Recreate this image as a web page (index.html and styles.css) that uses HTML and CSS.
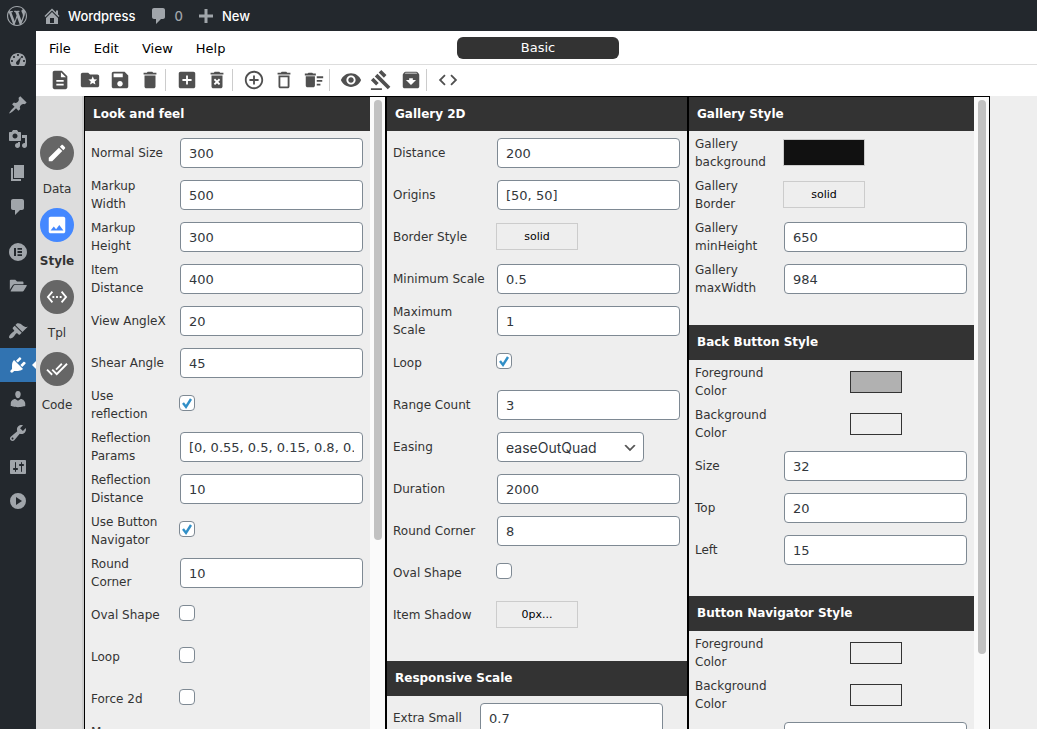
FILE: index.html
```html
<!DOCTYPE html>
<html lang="en">
<head>
    <meta charset="UTF-8">
    <meta name="viewport" content="width=device-width, initial-scale=1.0">
    <title>Wordpress - Gallery Builder</title>
    <link rel="stylesheet" href="styles.css">
</head>
<body>
    <!-- Admin bar -->
    <header class="adminbar">
        <a href="#" class="wp-logo" aria-label="About WordPress"><svg viewBox="0 0 20 20"><path d="M20 10c0-5.51-4.49-10-10-10C4.48 0 0 4.49 0 10c0 5.52 4.48 10 10 10 5.51 0 10-4.48 10-10zM7.78 15.37L4.37 6.22c.55-.02 1.17-.08 1.17-.08.5-.06.44-1.13-.06-1.11 0 0-1.45.11-2.37.11-.18 0-.37 0-.58-.01C4.12 2.69 6.87 1.11 10 1.11c2.33 0 4.45.87 6.05 2.34-.68-.11-1.65.39-1.65 1.58 0 .74.45 1.36.9 2.1.35.61.55 1.36.55 2.46 0 1.49-1.4 5-1.4 5l-3.03-8.37c.54-.02.82-.17.82-.17.5-.05.44-1.25-.06-1.22 0 0-1.44.12-2.38.12-.87 0-2.33-.12-2.33-.12-.5-.03-.56 1.2-.06 1.22l.92.08 1.26 3.41zM17.41 10c.24-.64.74-1.87.43-4.25.7 1.29 1.05 2.71 1.05 4.25 0 3.29-1.73 6.24-4.4 7.78.97-2.59 1.94-5.2 2.92-7.78zM6.1 18.09C3.12 16.65 1.11 13.53 1.11 10c0-1.3.23-2.48.72-3.59C3.25 10.3 4.67 14.2 6.1 18.09zm4.03-6.63l2.58 6.98c-.86.29-1.76.45-2.71.45-.79 0-1.57-.11-2.29-.33.81-2.38 1.62-4.74 2.42-7.1z"/></svg></a>
        <a href="#" class="site-name"><svg viewBox="0 0 20 20"><path d="M16 8.5l1.53 1.53-1.06 1.06L10 4.6l-6.47 6.49-1.06-1.06L10 2.5l4 4v-2h2v4zm-6-2.46l6 5.99V18H4v-5.97zM12 17v-5H8v5h4z"/></svg>Wordpress</a>
        <a href="#" class="comments"><svg viewBox="0 0 20 20"><path d="M5 2h9c1.1 0 2 .9 2 2v7c0 1.1-.9 2-2 2h-2l-5 5v-5H5c-1.1 0-2-.9-2-2V4c0-1.1.9-2 2-2z"/></svg>0</a>
        <a href="#" class="new-content"><svg viewBox="0 0 20 20"><path d="M17 8.500v3h-5.500V17h-3v-5.500H3v-3h5.500V3h3v5.500z"/></svg>New</a>
    </header>

    <div class="wrapper">
        <!-- Admin menu -->
        <nav class="adminmenu">
            <a href="#" aria-label="Dashboard"><svg viewBox="0 0 20 20"><path d="M3.76 16h12.48c1.1-1.37 1.76-3.11 1.76-5 0-4.42-3.58-8-8-8s-8 3.58-8 8c0 1.89.66 3.63 1.76 5zM10 4c.55 0 1 .45 1 1s-.45 1-1 1-1-.45-1-1 .45-1 1-1zM6 6c.55 0 1 .45 1 1s-.45 1-1 1-1-.45-1-1 .45-1 1-1zm8 0c.55 0 1 .45 1 1s-.45 1-1 1-1-.45-1-1 .45-1 1-1zm-5.370 5.550L13 7l-1.500 6c0 1.100-.9 2-1.500 2-1.100 0-2-.9-2-2 0-.57.24-1.080.63-1.450zM4 10c.55 0 1 .45 1 1s-.45 1-1 1-1-.45-1-1 .45-1 1-1zm12 0c.55 0 1 .45 1 1s-.45 1-1 1-1-.45-1-1 .45-1 1-1z"/></svg></a>
            <a href="#" class="group" aria-label="Posts"><svg viewBox="0 0 20 20"><path d="M10.44 3.02l1.82-1.82 6.36 6.35-1.83 1.82c-1.05-.68-2.48-.57-3.41.36l-.75.75c-.92.93-1.04 2.35-.35 3.41l-1.83 1.82-2.41-2.41-2.8 2.79c-.42.42-3.38 2.71-3.8 2.29s1.86-3.39 2.28-3.81l2.79-2.79L4.1 9.36l1.83-1.82c1.05.69 2.48.57 3.4-.36l.75-.75c.93-.92 1.05-2.35.36-3.41z"/></svg></a>
            <a href="#" aria-label="Media"><svg viewBox="0 0 20 20"><path d="M13 11V4c0-.55-.45-1-1-1h-1.67L9 1H5L3.67 3H2c-.55 0-1 .45-1 1v7c0 .55.45 1 1 1h10c.55 0 1-.45 1-1zM7 4.5c1.38 0 2.5 1.12 2.5 2.5S8.38 9.5 7 9.5 4.5 8.38 4.5 7 5.62 4.5 7 4.5zM14 6h5v10.5c0 1.38-1.12 2.5-2.5 2.5S14 17.88 14 16.5s1.12-2.5 2.5-2.5c.17 0 .34.02.5.05V9h-3V6zm-4 8.05V13h2v3.5c0 1.38-1.12 2.5-2.5 2.5S7 17.88 7 16.5 8.12 14 9.5 14c.17 0 .34.02.5.05z"/></svg></a>
            <a href="#" aria-label="Pages"><svg viewBox="0 0 20 20"><path d="M6 15V2h10v13H6zm-1 1h8v2H3V5h2v11z"/></svg></a>
            <a href="#" aria-label="Comments"><svg viewBox="0 0 20 20"><path d="M5 2h9c1.1 0 2 .9 2 2v7c0 1.1-.9 2-2 2h-2l-5 5v-5H5c-1.1 0-2-.9-2-2V4c0-1.1.9-2 2-2z"/></svg></a>
            <a href="#" class="group" aria-label="Elementor"><svg viewBox="0 0 20 20"><path fill-rule="evenodd" d="M10 1a9 9 0 1 0 0 18a9 9 0 1 0 0-18zM6 6h2v8H6zM9.500 6H14v1.800H9.500zM9.500 9.100H14v1.800H9.500zM9.500 12.200H14V14H9.500z"/></svg></a>
            <a href="#" aria-label="Templates"><svg viewBox="-1 -1 22 22"><path d="M1 4c0-.6.4-1 1-1h5l2 2h6c.6 0 1 .4 1 1v2H6.500c-1 0-1.800.5-2.300 1.300L1 14zM6.500 9H19c.6 0 .8.4.5 1l-3.200 5.300c-.3.500-.8.700-1.300.700H2.500c-.6 0-.8-.4-.5-.9L5.200 9.700c.3-.5.800-.7 1.300-.7z"/></svg></a>
            <a href="#" class="group" aria-label="Appearance"><svg viewBox="0 0 20 20"><path d="M14.48 11.06L7.41 3.99l1.5-1.5c.5-.56 2.3-.47 3.51.32 1.21.8 1.43 1.28 2.91 2.1 1.18.64 2.45 1.26 4.45.85zm-.71.71L6.7 4.7 4.93 6.47c-.39.39-.39 1.02 0 1.41l1.06 1.06c.39.39.39 1.03 0 1.42-.6.6-1.43 1.11-2.21 1.69-.35.26-.7.53-1.01.84C1.43 14.23.4 16.08 1.4 17.07c.99 1 2.84-.03 4.18-1.36.31-.31.58-.66.85-1.02.57-.78 1.08-1.61 1.69-2.21.39-.39 1.02-.39 1.41 0l1.06 1.06c.39.39 1.02.39 1.41 0z"/></svg></a>
            <a href="#" class="current" aria-label="Plugins"><svg viewBox="0 0 20 20"><path d="M13.11 4.36L9.87 7.6 8 5.73l3.24-3.24c.35-.34 1.05-.2 1.56.32.52.51.66 1.21.31 1.55zm-8 1.77l.91-1.12 9.01 9.01-1.19.84c-.71.71-2.63 1.16-3.82 1.16H6.14L4.9 17.26c-.59.59-1.54.59-2.12 0-.59-.58-.59-1.53 0-2.12l1.24-1.24v-3.88c0-1.13.4-3.19 1.09-3.89zm7.26 3.97l3.24-3.24c.34-.35 1.04-.21 1.55.31.52.51.66 1.21.31 1.55l-3.24 3.25z"/></svg></a>
            <a href="#" aria-label="Users"><svg viewBox="0 0 20 20"><path d="M10 9.250c-2.270 0-2.730-3.440-2.730-3.440C7 4.020 7.820 2 9.970 2c2.160 0 2.980 2.020 2.710 3.810 0 0-.41 3.440-2.680 3.440zm0 2.570L12.720 10c2.390 0 4.520 2.330 4.520 4.530v2.490s-3.650 1.130-7.240 1.130c-3.650 0-7.240-1.130-7.240-1.130v-2.490c0-2.250 1.940-4.480 4.470-4.480z"/></svg></a>
            <a href="#" aria-label="Tools"><svg viewBox="0 0 20 20"><path d="M16.68 9.77c-1.34 1.34-3.3 1.67-4.95.99l-5.41 6.52c-.99.99-2.59.99-3.58 0s-.99-2.59 0-3.57l6.52-5.42c-.68-1.65-.35-3.61.99-4.95 1.28-1.28 3.12-1.62 4.72-1.06l-2.89 2.89 2.82 2.82 2.86-2.87c.53 1.58.18 3.39-1.08 4.65zM3.81 16.21c.4.39 1.04.39 1.43 0 .4-.4.4-1.04 0-1.43-.39-.4-1.03-.4-1.43 0-.39.39-.39 1.03 0 1.43z"/></svg></a>
            <a href="#" aria-label="Settings"><svg viewBox="0 0 20 20"><path d="M18 16V4c0-.55-.45-1-1-1H3c-.55 0-1 .45-1 1v12c0 .55.45 1 1 1h14c.55 0 1-.45 1-1zM8 11h1c.55 0 1 .45 1 1s-.45 1-1 1H8v1.5c0 .28-.22.5-.5.5s-.5-.22-.5-.5V13H6c-.55 0-1-.45-1-1s.45-1 1-1h1V5.5c0-.28.22-.5.5-.5s.5.22.5.5V11zm5-2h-1c-.55 0-1-.45-1-1s.45-1 1-1h1V5.5c0-.28.22-.5.5-.5s.5.22.5.5V7h1c.55 0 1 .45 1 1s-.45 1-1 1h-1v5.5c0 .28-.22.5-.5.5s-.5-.22-.5-.5V9z"/></svg></a>
            <a href="#" aria-label="Collapse menu"><svg viewBox="0 0 20 20"><path fill-rule="evenodd" d="M10 2a8 8 0 1 0 0 16a8 8 0 1 0 0-16zM8 6l6 4-6 4z"/></svg></a>
        </nav>

        <main class="editor">
            <div class="menubar">
                <nav class="menu">
                    <a href="#">File</a>
                    <a href="#">Edit</a>
                    <a href="#">View</a>
                    <a href="#">Help</a>
                </nav>
                <button type="button" class="mode">Basic</button>
            </div>

            <div class="toolbar">
                <button type="button" aria-label="New"><svg viewBox="0 0 24 24"><path d="M14 2H6c-1.1 0-1.99.9-1.99 2L4 20c0 1.1.89 2 1.99 2H18c1.1 0 2-.9 2-2V8l-6-6zm2 16H8v-2h8v2zm0-4H8v-2h8v2zm-3-5V3.5L18.5 9H13z"/></svg></button>
                <button type="button" aria-label="Open"><svg viewBox="0 0 24 24"><path d="M20 6h-8l-2-2H4c-1.1 0-1.99.9-1.99 2L2 18c0 1.1.9 2 2 2h16c1.1 0 2-.9 2-2V8c0-1.1-.9-2-2-2zm-2.06 11L15 15.28 12.06 17l.78-3.33-2.59-2.24 3.41-.29L15 8l1.34 3.14 3.41.29-2.59 2.24.78 3.33z"/></svg></button>
                <button type="button" aria-label="Save"><svg viewBox="0 0 24 24"><path d="M17 3H5c-1.11 0-2 .9-2 2v14c0 1.1.89 2 2 2h14c1.1 0 2-.9 2-2V7l-4-4zm-5 16c-1.66 0-3-1.34-3-3s1.34-3 3-3 3 1.34 3 3-1.34 3-3 3zm3-10H5V5h10v4z"/></svg></button>
                <button type="button" aria-label="Delete"><svg viewBox="0 0 24 24"><path d="M6 19c0 1.1.9 2 2 2h8c1.1 0 2-.9 2-2V7H6v12zM19 4h-3.5l-1-1h-5l-1 1H5v2h14V4z"/></svg></button>
                <span class="sep"></span>
                <button type="button" aria-label="Add page"><svg viewBox="0 0 24 24"><path d="M19 3H5c-1.11 0-2 .9-2 2v14c0 1.1.89 2 2 2h14c1.1 0 2-.9 2-2V5c0-1.1-.9-2-2-2zm-2 10h-4v4h-2v-4H7v-2h4V7h2v4h4v2z"/></svg></button>
                <button type="button" aria-label="Remove page"><svg viewBox="0 0 24 24"><path d="M6 19c0 1.1.9 2 2 2h8c1.1 0 2-.9 2-2V7H6v12zm2.46-7.12l1.41-1.41L12 12.59l2.12-2.12 1.41 1.41L13.41 14l2.12 2.12-1.41 1.41L12 15.41l-2.12 2.12-1.41-1.41L10.59 14l-2.13-2.12zM15.5 4l-1-1h-5l-1 1H5v2h14V4z"/></svg></button>
                <span class="sep"></span>
                <button type="button" aria-label="Add item"><svg viewBox="0 0 24 24"><path d="M13 7h-2v4H7v2h4v4h2v-4h4v-2h-4V7zm-1-5C6.48 2 2 6.48 2 12s4.48 10 10 10 10-4.48 10-10S17.52 2 12 2zm0 18c-4.41 0-8-3.59-8-8s3.59-8 8-8 8 3.59 8 8-3.59 8-8 8z"/></svg></button>
                <button type="button" aria-label="Remove item"><svg viewBox="0 0 24 24"><path d="M6 19c0 1.1.9 2 2 2h8c1.1 0 2-.9 2-2V7H6v12zM8 9h8v10H8V9zm7.5-5l-1-1h-5l-1 1H5v2h14V4h-3.5z"/></svg></button>
                <button type="button" aria-label="Remove all items"><svg viewBox="0 0 24 24"><path d="M15 16h4v2h-4zm0-8h7v2h-7zm0 4h6v2h-6zM3 18c0 1.1.9 2 2 2h6c1.1 0 2-.9 2-2V8H3v10zM14 5h-3l-1-1H6L5 5H2v2h12z"/></svg></button>
                <span class="sep"></span>
                <button type="button" aria-label="Preview"><svg viewBox="0 0 24 24"><path d="M12 4.5C7 4.5 2.73 7.61 1 12c1.73 4.39 6 7.5 11 7.5s9.27-3.11 11-7.5c-1.73-4.39-6-7.5-11-7.5zM12 17c-2.76 0-5-2.24-5-5s2.24-5 5-5 5 2.24 5 5-2.24 5-5 5zm0-8c-1.66 0-3 1.34-3 3s1.34 3 3 3 3-1.34 3-3-1.34-3-3-3z"/></svg></button>
                <button type="button" aria-label="Build"><svg viewBox="0 0 24 24"><path d="M1 21h12v2H1zM5.245 8.07l2.83-2.827 14.14 14.142-2.828 2.828zM12.317 1l5.657 5.656-2.83 2.83-5.654-5.66zM3.825 9.485l5.657 5.657-2.828 2.828-5.657-5.657z"/></svg></button>
                <button type="button" aria-label="Archive"><svg viewBox="0 0 24 24"><path d="M20.54 5.23l-1.39-1.68C18.88 3.21 18.47 3 18 3H6c-.47 0-.88.21-1.16.55L3.46 5.23C3.17 5.57 3 6.02 3 6.5V19c0 1.1.9 2 2 2h14c1.1 0 2-.9 2-2V6.5c0-.48-.17-.93-.46-1.27zM12 17.5L6.5 12H10v-2h4v2h3.5L12 17.5zM5.12 5l.81-1h12l.94 1H5.12z"/></svg></button>
                <span class="sep"></span>
                <button type="button" aria-label="Source"><svg viewBox="0 0 24 24"><path d="M9.4 16.6L4.8 12l4.6-4.6L8 6l-6 6 6 6 1.4-1.4zm5.2 0l4.6-4.6-4.6-4.6L16 6l6 6-6 6-1.4-1.4z"/></svg></button>
            </div>

            <div class="workspace">
                <nav class="tabs">
                    <button type="button"><span class="circle"><svg viewBox="0 0 24 24"><path d="M3 17.250V21h3.750L17.810 9.940l-3.750-3.750L3 17.250zM20.710 7.040c.39-.39.39-1.020 0-1.410l-2.340-2.340c-.39-.39-1.020-.39-1.410 0l-1.830 1.830 3.750 3.750 1.830-1.830z"/></svg></span>Data</button>
                    <button type="button" class="active"><span class="circle"><svg viewBox="0 0 24 24"><path d="M21 19V5c0-1.1-.9-2-2-2H5c-1.1 0-2 .9-2 2v14c0 1.1.9 2 2 2h14c1.1 0 2-.9 2-2zM8.500 13.500l2.500 3.010L14.500 12l4.500 6H5l3.500-4.500z"/></svg></span>Style</button>
                    <button type="button"><span class="circle"><svg viewBox="0 0 24 24"><path d="M7.77 6.76L6.23 5.48.82 12l5.41 6.52 1.54-1.28L3.42 12l4.35-5.24zM7 13h2v-2H7v2zm10-2h-2v2h2v-2zm-6 2h2v-2h-2v2zm6.77-7.52l-1.54 1.28L20.58 12l-4.35 5.24 1.54 1.28L23.18 12l-5.41-6.52z"/></svg></span>Tpl</button>
                    <button type="button"><span class="circle"><svg viewBox="0 0 24 24"><path d="M18 7l-1.41-1.41-6.34 6.34 1.41 1.41L18 7zm4.24-1.41L11.66 16.17 7.48 12l-1.41 1.41L11.66 19l12-12-1.42-1.41zM.41 13.41L6 19l1.41-1.41L1.83 12 .41 13.41z"/></svg></span>Code</button>
                </nav>

                <!-- Column 1 -->
                <div class="panel">
                    <div class="panel-body">
                        <section>
                            <h2>Look and feel</h2>
                            <div class="row"><label for="normalSize">Normal Size</label><input type="text" id="normalSize" value="300"></div>
                            <div class="row"><label for="markupWidth">Markup Width</label><input type="text" id="markupWidth" value="500"></div>
                            <div class="row"><label for="markupHeight">Markup Height</label><input type="text" id="markupHeight" value="300"></div>
                            <div class="row"><label for="itemDistance">Item Distance</label><input type="text" id="itemDistance" value="400"></div>
                            <div class="row"><label for="viewAngleX">View AngleX</label><input type="text" id="viewAngleX" value="20"></div>
                            <div class="row"><label for="shearAngle">Shear Angle</label><input type="text" id="shearAngle" value="45"></div>
                            <div class="row"><label for="useReflection">Use reflection</label><input type="checkbox" id="useReflection" checked></div>
                            <div class="row"><label for="reflectionParams">Reflection Params</label><input type="text" id="reflectionParams" value="[0, 0.55, 0.5, 0.15, 0.8, 0.05]"></div>
                            <div class="row"><label for="reflectionDistance">Reflection Distance</label><input type="text" id="reflectionDistance" value="10"></div>
                            <div class="row"><label for="useButtonNav">Use Button Navigator</label><input type="checkbox" id="useButtonNav" checked></div>
                            <div class="row"><label for="roundCorner">Round Corner</label><input type="text" id="roundCorner" value="10"></div>
                            <div class="row"><label for="ovalShape">Oval Shape</label><input type="checkbox" id="ovalShape"></div>
                            <div class="row"><label for="loop">Loop</label><input type="checkbox" id="loop"></div>
                            <div class="row"><label for="force2d">Force 2d</label><input type="checkbox" id="force2d"></div>
                            <div class="row"><label for="mouseWheel">Mouse<br>Wheel</label><input type="checkbox" id="mouseWheel"></div>
                        </section>
                    </div>
                    <div class="scrollbar"><div class="thumb" style="height: 70%"></div></div>
                </div>

                <!-- Column 2 -->
                <div class="panel">
                    <div class="panel-body">
                        <section class="wide">
                            <h2>Gallery 2D</h2>
                            <div class="row"><label for="distance">Distance</label><input type="text" id="distance" value="200"></div>
                            <div class="row"><label for="origins">Origins</label><input type="text" id="origins" value="[50, 50]"></div>
                            <div class="row"><label for="borderStyle">Border Style</label><button type="button" class="value" id="borderStyle">solid</button></div>
                            <div class="row"><label for="minScale">Minimum Scale</label><input type="text" id="minScale" value="0.5"></div>
                            <div class="row"><label for="maxScale">Maximum<br>Scale</label><input type="text" id="maxScale" value="1"></div>
                            <div class="row"><label for="loop2d">Loop</label><input type="checkbox" id="loop2d" checked></div>
                            <div class="row"><label for="rangeCount">Range Count</label><input type="text" id="rangeCount" value="3"></div>
                            <div class="row"><label for="easing">Easing</label>
                                <select id="easing">
                                    <option>easeOutQuad</option>
                                    <option>easeInQuad</option>
                                    <option>linear</option>
                                </select>
                            </div>
                            <div class="row"><label for="duration">Duration</label><input type="text" id="duration" value="2000"></div>
                            <div class="row"><label for="roundCorner2d">Round Corner</label><input type="text" id="roundCorner2d" value="8"></div>
                            <div class="row"><label for="ovalShape2d">Oval Shape</label><input type="checkbox" id="ovalShape2d"></div>
                            <div class="row"><label for="itemShadow">Item Shadow</label><button type="button" class="value" id="itemShadow">0px...</button></div>
                        </section>
                        <section class="narrow">
                            <h2>Responsive Scale</h2>
                            <div class="row"><label for="extraSmall">Extra Small</label><input type="text" id="extraSmall" value="0.7"></div>
                        </section>
                    </div>
                </div>

                <!-- Column 3 -->
                <div class="panel">
                    <div class="panel-body">
                        <section>
                            <h2>Gallery Style</h2>
                            <div class="row"><label for="galleryBg">Gallery background</label><button type="button" class="value dark" id="galleryBg"></button></div>
                            <div class="row"><label for="galleryBorder">Gallery Border</label><button type="button" class="value" id="galleryBorder">solid</button></div>
                            <div class="row"><label for="minHeight">Gallery minHeight</label><input type="text" id="minHeight" value="650"></div>
                            <div class="row"><label for="maxWidth">Gallery maxWidth</label><input type="text" id="maxWidth" value="984"></div>
                        </section>
                        <section>
                            <h2>Back Button Style</h2>
                            <div class="row"><label for="backFg">Foreground Color</label><button type="button" class="swatch gray" id="backFg"></button></div>
                            <div class="row"><label for="backBg">Background Color</label><button type="button" class="swatch" id="backBg"></button></div>
                            <div class="row"><label for="backSize">Size</label><input type="text" id="backSize" value="32"></div>
                            <div class="row"><label for="backTop">Top</label><input type="text" id="backTop" value="20"></div>
                            <div class="row"><label for="backLeft">Left</label><input type="text" id="backLeft" value="15"></div>
                        </section>
                        <section>
                            <h2>Button Navigator Style</h2>
                            <div class="row"><label for="navFg">Foreground Color</label><button type="button" class="swatch" id="navFg"></button></div>
                            <div class="row"><label for="navBg">Background Color</label><button type="button" class="swatch" id="navBg"></button></div>
                            <div class="row"><span></span><input type="text" aria-label="Size"></div>
                        </section>
                    </div>
                    <div class="scrollbar"><div class="thumb" style="height: 88%"></div></div>
                </div>
            </div>
        </main>
    </div>
</body>
</html>
```
FILE: styles.css
```css
* {
    box-sizing: border-box;
}

body {
    font-family: Verdana, "DejaVu Sans", sans-serif;
    font-size: 12px;
    color: #333;
    background-color: #eee;
    margin: 0;
    height: 100vh;
    display: flex;
    flex-direction: column;
    overflow: hidden;
}

svg {
    display: block;
    fill: currentColor;
    flex: none;
}

a {
    text-decoration: none;
}

button {
    font-family: inherit;
    cursor: pointer;
}

/* Admin bar */
.adminbar {
    background-color: #23282d;
    height: 31px;
    flex: none;
    display: flex;
    align-items: center;
    gap: 13px;
    padding-left: 7px;
    font-family: Inter, sans-serif;
    font-size: 13px;
    font-weight: 500;
}

.adminbar a {
    display: flex;
    align-items: center;
    gap: 6px;
    color: #fff;
}

.adminbar svg {
    width: 20px;
    height: 20px;
    color: #a0a5aa;
}

.adminbar .site-name {
    margin-left: 2px;
}

.adminbar .comments {
    color: #a0a5aa;
}

.wrapper {
    display: flex;
    flex: 1;
    min-height: 0;
}

/* Admin menu */
.adminmenu {
    width: 36px;
    flex: none;
    background-color: #23282d;
    padding-top: 12px;
}

.adminmenu a {
    display: flex;
    align-items: center;
    justify-content: center;
    height: 34px;
    color: #a0a5aa;
}

.adminmenu svg {
    width: 20px;
    height: 20px;
}

.adminmenu .group {
    margin-top: 11px;
}

.adminmenu .current {
    background-color: #3173b1;
    color: #fff;
    position: relative;
}

.adminmenu .current::after {
    content: "";
    position: absolute;
    right: 0;
    top: 13px;
    border: 4px solid transparent;
    border-left: none;
    border-right-color: #fff;
}

/* Editor */
.editor {
    flex: 1;
    min-width: 0;
    display: flex;
    flex-direction: column;
}

.menubar {
    height: 34px;
    flex: none;
    display: grid;
    grid-template-columns: 1fr 162px 1fr;
    align-items: center;
    padding-left: 3px;
    background-color: #fff;
    border-bottom: 1px solid #ddd;
    font-size: 13px;
}

.menu {
    display: flex;
    gap: 23px;
    padding: 2px 0 0 10px;
}

.menu a {
    color: #000;
}

.mode {
    height: 22px;
    border: none;
    border-radius: 6px;
    background-color: #333;
    color: #fff;
    font-size: 13px;
    padding: 0;
}

.toolbar {
    height: 31px;
    flex: none;
    display: flex;
    align-items: center;
    padding: 0 9px 2px;
    background-color: #fff;
}

.toolbar button {
    width: 30px;
    padding: 0 4px;
    border: none;
    background: none;
    color: #505050;
}

.toolbar svg {
    width: 22px;
    height: 22px;
}

.sep {
    width: 1px;
    height: 22px;
    margin-right: 6px;
    background-color: #ccc;
}

.workspace {
    flex: 1;
    min-height: 0;
    display: flex;
}

/* Round tabs on the left */
.tabs {
    width: 48px;
    flex: none;
    background-color: #ddd;
    border-right: 2px solid #ccc;
    padding-top: 40px;
}

.tabs button {
    display: flex;
    flex-direction: column;
    align-items: center;
    gap: 12px;
    width: 42px;
    height: 72px;
    padding: 0;
    border: none;
    background: none;
    font-size: 12px;
    color: #333;
}

.circle {
    width: 34px;
    height: 34px;
    border-radius: 50%;
    background-color: #666;
    color: #fff;
    display: flex;
    align-items: center;
    justify-content: center;
}

.circle svg {
    width: 22px;
    height: 22px;
}

.tabs .active {
    font-weight: bold;
}

.active .circle {
    background-color: #4488ff;
}

/* Panels */
.panel {
    flex: 0 1 302px;
    display: flex;
    border: 1px solid #000;
    border-bottom: none;
    overflow: hidden;
}

.panel-body {
    flex: 1;
    min-width: 0;
}

.scrollbar {
    width: 15px;
    flex: none;
    background-color: #fafafa;
    padding: 3px 3px 0 4px;
}

.thumb {
    background-color: #c1c1c1;
    border-radius: 4px;
}

section {
    padding-bottom: 26px;
}

h2 {
    margin: 0;
    padding-left: 8px;
    height: 35px;
    line-height: 35px;
    font-size: 12px;
    background-color: #333;
    color: #fff;
}

section:first-child h2 {
    height: 34px;
    line-height: 34px;
}

.row {
    display: grid;
    grid-template-columns: 81px 183px;
    column-gap: 8px;
    align-items: center;
    height: 42px;
    padding-left: 6px;
}

.wide .row {
    grid-template-columns: 96px 183px;
}

.narrow .row {
    grid-template-columns: 79px 183px;
}

label {
    line-height: 18px;
    padding-top: 2px;
}

input[type="text"],
select {
    height: 30px;
    margin: 2px 0 0;
    padding: 0 8px;
    border: 1px solid #7e8993;
    border-radius: 4px;
    background-color: #fff;
    color: #32373c;
    font-family: inherit;
    font-size: 13px;
}

input[type="checkbox"] {
    appearance: none;
    width: 16px;
    height: 16px;
    margin: 0 0 2px -1px;
    border: 1px solid #7e8993;
    border-radius: 4px;
    background-color: #fff;
}

input[type="checkbox"]:checked {
    background-image: url("data:image/svg+xml,%3Csvg xmlns='http://www.w3.org/2000/svg' viewBox='0 0 14 14'%3E%3Cpath d='M3 7l3 4 5-8' fill='none' stroke='%23318fc7' stroke-width='2.4'/%3E%3C/svg%3E");
}

select {
    appearance: none;
    width: 147px;
    font-family: Inter, sans-serif;
    font-size: 14px;
    background: #fff url("data:image/svg+xml,%3Csvg xmlns='http://www.w3.org/2000/svg' viewBox='0 0 20 20'%3E%3Cpath d='M5 6l5 5 5-5 2 1-7 7-7-7 2-1z' fill='%23555'/%3E%3C/svg%3E") no-repeat right 5px top 55%;
    background-size: 16px 16px;
}

.value {
    width: 82px;
    height: 27px;
    margin-left: -1px;
    padding: 0;
    border: 1px solid #ccc;
    background-color: #eee;
    color: #000;
    font-size: 11px;
}

.dark {
    background-color: #111;
}

.swatch {
    justify-self: center;
    width: 52px;
    height: 22px;
    margin-top: 2px;
    padding: 0;
    border: 1px solid #333;
    background-color: #eee;
}

.gray {
    background-color: #b1b1b1;
}
```
